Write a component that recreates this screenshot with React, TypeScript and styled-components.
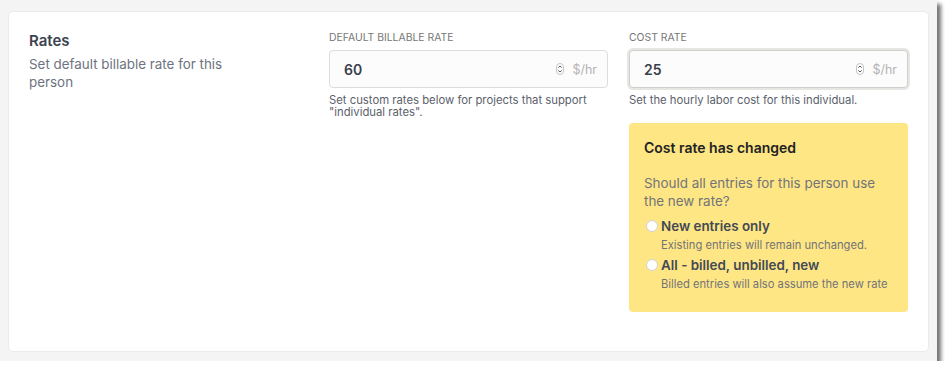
import React from "react";
import styled, { createGlobalStyle } from "styled-components";

const GlobalStyle = createGlobalStyle`
  html, body {
    margin: 0;
    padding: 0;
    background: #ffffff;
  }
  body {
    font-family: Inter, "Liberation Sans", sans-serif;
    -webkit-font-smoothing: antialiased;
  }
  * {
    box-sizing: border-box;
  }
`;

const Window = styled.div`
  width: 937px;
  height: 361px;
  background: #f4f4f4;
  padding: 11px 8px 0 8px;
  box-shadow: 4px 4px 4px rgba(0, 0, 0, 0.55);
`;

const Card = styled.section`
  height: 341px;
  background: #ffffff;
  border: 1px solid #ebebeb;
  border-radius: 5px;
  padding: 19px 20px 20px 20px;
  display: grid;
  grid-template-columns: repeat(3, 279px);
  column-gap: 21px;
  align-items: start;
`;

const Intro = styled.div`
  display: flex;
  flex-direction: column;
  gap: 4px;
`;

const Title = styled.h2`
  margin: 0;
  font-size: 15px;
  font-weight: 600;
  color: #3c4350;
  line-height: 20px;
`;

const Description = styled.p`
  margin: 0;
  width: 205px;
  font-size: 13.4px;
  line-height: 18px;
  color: #6d7380;
`;

const Field = styled.div`
  display: flex;
  flex-direction: column;
`;

const Label = styled.label`
  font-size: 10.4px;
  line-height: 14px;
  text-transform: uppercase;
  color: #777777;
  margin-bottom: 5px;
`;

const InputBox = styled.div<{ $focused?: boolean }>`
  height: 38px;
  display: flex;
  align-items: center;
  padding: 0 10px 0 14px;
  background: #fcfcfc;
  border: 1px solid ${(p) => (p.$focused ? "#cfcfcc" : "#dddddd")};
  border-radius: 4px;
  box-shadow: ${(p) => (p.$focused ? "0 0 0 2px #e6e6e2" : "none")};
`;

const Value = styled.span`
  flex: 1;
  font-size: 14px;
  font-weight: 600;
  color: #3a3f4a;
`;

const Unit = styled.span`
  margin-left: 8px;
  font-size: 12.5px;
  color: #b3b3b3;
`;

const Help = styled.p`
  margin: 6px 0 0 0;
  font-size: 11.3px;
  line-height: 12px;
  color: #5b616b;
`;

const Notice = styled.div`
  margin-top: 17px;
  background: #fee685;
  border-radius: 4px;
  padding: 16px 15px 20px 15px;
  display: flex;
  flex-direction: column;
`;

const NoticeTitle = styled.h3`
  margin: 0 0 17px 0;
  font-size: 14px;
  font-weight: 600;
  color: #222222;
  line-height: 18px;
`;

const NoticeText = styled.p`
  margin: 0 0 7px 0;
  font-size: 13.4px;
  line-height: 18px;
  color: #737478;
`;

const Option = styled.div`
  display: grid;
  grid-template-columns: 16px 1fr;
  column-gap: 1px;
  & + & {
    margin-top: 3px;
  }
`;

const Radio = styled.span`
  width: 12px;
  height: 12px;
  margin: 3px 0 0 2px;
  border-radius: 50%;
  background: #ffffff;
  border: 1px solid #d2d2d2;
`;

const OptionLabel = styled.span`
  font-size: 13.4px;
  font-weight: 600;
  color: #434955;
  line-height: 18px;
`;

const OptionHint = styled.span`
  grid-column: 2;
  margin-top: 2px;
  font-size: 11.2px;
  line-height: 16px;
  color: #737478;
`;

const Stepper = () => (
  <svg width="8" height="12" viewBox="0 0 8 12" fill="none">
    <rect x="0.5" y="0.5" width="7" height="11" rx="3.5" fill="#fff" stroke="#c4c4c4" />
    <path d="M2.3 4.6 L4 3 L5.7 4.6" stroke="#555" strokeWidth="1" />
    <path d="M2.3 7.4 L4 9 L5.7 7.4" stroke="#555" strokeWidth="1" />
  </svg>
);

const RateInput = ({ value, focused }: { value: string; focused?: boolean }) => (
  <InputBox $focused={focused}>
    <Value>{value}</Value>
    <Stepper />
    <Unit>$/hr</Unit>
  </InputBox>
);

export default function App() {
  return (
    <>
      <GlobalStyle />
      <Window>
        <Card>
          <Intro>
            <Title>Rates</Title>
            <Description>Set default billable rate for this person</Description>
          </Intro>
          <Field>
            <Label>Default billable rate</Label>
            <RateInput value="60" />
            <Help>
              Set custom rates below for projects that support "individual rates".
            </Help>
          </Field>
          <Field>
            <Label>Cost rate</Label>
            <RateInput value="25" focused />
            <Help>Set the hourly labor cost for this individual.</Help>
            <Notice>
              <NoticeTitle>Cost rate has changed</NoticeTitle>
              <NoticeText>Should all entries for this person use the new rate?</NoticeText>
              <Option>
                <Radio />
                <OptionLabel>New entries only</OptionLabel>
                <OptionHint>Existing entries will remain unchanged.</OptionHint>
              </Option>
              <Option>
                <Radio />
                <OptionLabel>All - billed, unbilled, new</OptionLabel>
                <OptionHint>Billed entries will also assume the new rate</OptionHint>
              </Option>
            </Notice>
          </Field>
        </Card>
      </Window>
    </>
  );
}
